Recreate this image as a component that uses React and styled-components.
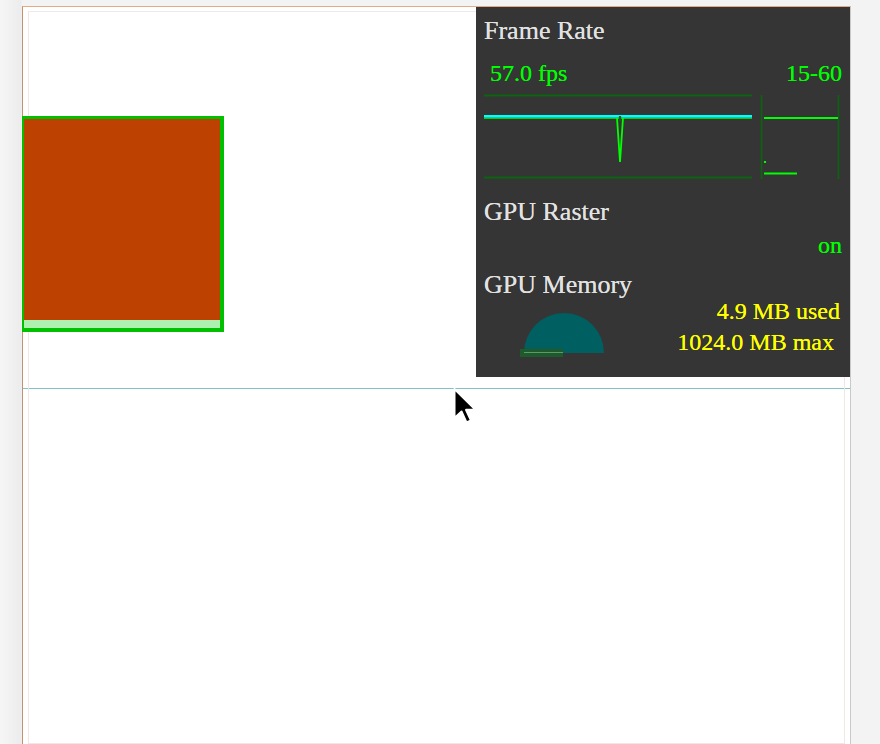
import React from "react";
import styled, { createGlobalStyle } from "styled-components";

const GlobalStyle = createGlobalStyle`
    html, body {
        margin: 0;
        height: 100%;
        overflow: hidden;
    }

    body {
        background: linear-gradient(to right, #f6f6f6 0px, #ececec 21px, #f3f3f3 22px);
        font-family: "Liberation Serif", "Times New Roman", serif;
    }
`

const Page = styled.div`
    position: relative;
    box-sizing: border-box;
    margin: 6px 0 0 22px;
    width: 829px;
    height: calc(100vh - 6px);
    background: #fff;
    border-top: 1px solid #e2ab84;
    border-left: 1px solid #c4916f;
    border-right: 1px solid #c9c9c9;

    &::before {
        content: "";
        position: absolute;
        top: 4px;
        left: 5px;
        right: 5px;
        bottom: 0;
        border: 1px solid #f1e6e2;
        border-top-color: #ebebeb;
        pointer-events: none;
    }
`

const Stage = styled.div`
    position: relative;
    height: 381px;
    padding-top: 109px;
    box-sizing: border-box;
`

const Layer = styled.div`
    position: relative;
    box-sizing: border-box;
    margin-left: -1px;
    width: 202px;
    height: 216px;
    border-style: solid;
    border-color: #00c000;
    border-width: 3px 4px 4px 2px;
    background: #bd4100;
    display: flex;
    flex-direction: column;
    justify-content: flex-end;
`

const LayerStrip = styled.div`
    height: 8px;
    background: #aef0b0;
`

const Divider = styled.div`
    height: 1px;
    background: #7fc3c6;
`

const Hud = styled.div`
    position: absolute;
    top: 0;
    right: 0;
    width: 374px;
    height: 370px;
    box-sizing: border-box;
    padding: 9px 8px 0 8px;
    background: #353535;
    display: flex;
    flex-direction: column;
    font-family: "Liberation Serif", "Times New Roman", "DejaVu Serif", serif;
    -webkit-font-smoothing: antialiased;
`

const Heading = styled.div`
    color: #e2e2e2;
    font-size: 26px;
    line-height: ${props => props.tight ? "26px" : "30px"};
    margin-top: ${props => props.gap || 0}px;
    white-space: nowrap;
    text-shadow: 0 0 0.4px #e2e2e2;
`

const Row = styled.div`
    display: flex;
    justify-content: space-between;
    margin-top: ${props => props.gap || 0}px;
    padding-left: ${props => props.indent || 0}px;
`

const Value = styled.div`
    color: ${props => props.color || "#00ff00"};
    font-size: 24px;
    line-height: ${props => props.lh || 28}px;
    margin-top: ${props => props.gap || 0}px;
    margin-right: ${props => props.inset || 0}px;
    text-align: right;
    white-space: nowrap;
    text-shadow: 0 0 0.4px ${props => props.color || "#00ff00"};
`

const Graphs = styled.div`
    display: flex;
    gap: 8px;
    margin-top: 7px;
`

const MemoryBody = styled.div`
    display: flex;
    align-items: flex-start;
`

const MemoryText = styled.div`
    flex: 1;
    display: flex;
    flex-direction: column;
    align-items: flex-end;
`

const Gauge = styled.svg`
    margin: 11px 0 0 32px;
    flex-shrink: 0;
`

const Pointer = styled.svg`
    position: absolute;
    left: 429px;
    top: 380px;
    pointer-events: none;
`

const DARK = "#0c6410";
const BRIGHT = "#00ff00";

const FpsGraph = () => (
    <svg width="268" height="86" viewBox="0 0 268 86">
        <line x1="0" y1="1.5" x2="268" y2="1.5" stroke={DARK} strokeWidth="2" />
        <line x1="0" y1="83.5" x2="268" y2="83.5" stroke={DARK} strokeWidth="2" />
        <line x1="0" y1="22.4" x2="268" y2="22.4" stroke="#00ffff" strokeWidth="2.6" />
        <line x1="0" y1="24.4" x2="268" y2="24.4" stroke="#10c810" strokeWidth="1.4" />
        <polyline points="133,24 136,68 139,24" fill="none" stroke={BRIGHT} strokeWidth="1.8" />
        <line x1="136" y1="22" x2="136" y2="27" stroke="#1d5a1d" strokeWidth="2.2" />
    </svg>
)

const FpsHistogram = () => (
    <svg width="82" height="86" viewBox="0 0 82 86">
        <line x1="1.5" y1="1" x2="1.5" y2="85" stroke={DARK} strokeWidth="1.6" />
        <line x1="78.5" y1="1" x2="78.5" y2="85" stroke={DARK} strokeWidth="1.6" />
        <line x1="4" y1="24" x2="78" y2="24" stroke={BRIGHT} strokeWidth="2" />
        <rect x="4" y="67" width="2" height="2" fill={BRIGHT} />
        <line x1="4" y1="79.5" x2="37" y2="79.5" stroke={BRIGHT} strokeWidth="2" />
    </svg>
)

const MemoryGauge = () => (
    <Gauge width="92" height="50" viewBox="0 0 92 50">
        <path d="M8 44 A40 40 0 0 1 88 44 Z" fill="#005f61" />
        <rect x="4" y="40" width="43" height="8" fill="#1f5a2c" />
        <line x1="8" y1="43.5" x2="47" y2="43.5" stroke="#5a9c68" strokeWidth="1" />
    </Gauge>
)

const HeadsUp = () => (
    <Hud>
        <Heading>Frame Rate</Heading>
        <Row gap={13} indent={6}>
            <Value>57.0 fps</Value>
            <Value>15-60</Value>
        </Row>
        <Graphs>
            <FpsGraph />
            <FpsHistogram />
        </Graphs>
        <Heading gap={17}>GPU Raster</Heading>
        <Value gap={4}>on</Value>
        <Heading tight gap={13}>GPU Memory</Heading>
        <MemoryBody>
            <MemoryGauge />
            <MemoryText>
                <Value color="#ffff00" lh={24} gap={1} inset={2}>4.9 MB used</Value>
                <Value color="#ffff00" lh={24} gap={7} inset={8}>1024.0 MB max</Value>
            </MemoryText>
        </MemoryBody>
    </Hud>
)

const App = () => {
    return (
        <>
            <GlobalStyle />
            <Page>
                <Stage>
                    <Layer>
                        <LayerStrip />
                    </Layer>
                    <HeadsUp />
                </Stage>
                <Divider />
                {/* mouse arrow resting just below the divider */}
                <Pointer width="30" height="44" viewBox="0 0 30 44">
                    <path d="M2.5 2 L2.5 31 L9.5 24.5 L14.5 35.5 L19 33.5 L14 22.8 L23.5 22.8 Z"
                        fill="#000" stroke="#fff" strokeWidth="2" strokeLinejoin="round" />
                </Pointer>
            </Page>
        </>
    )
}

export default App;
